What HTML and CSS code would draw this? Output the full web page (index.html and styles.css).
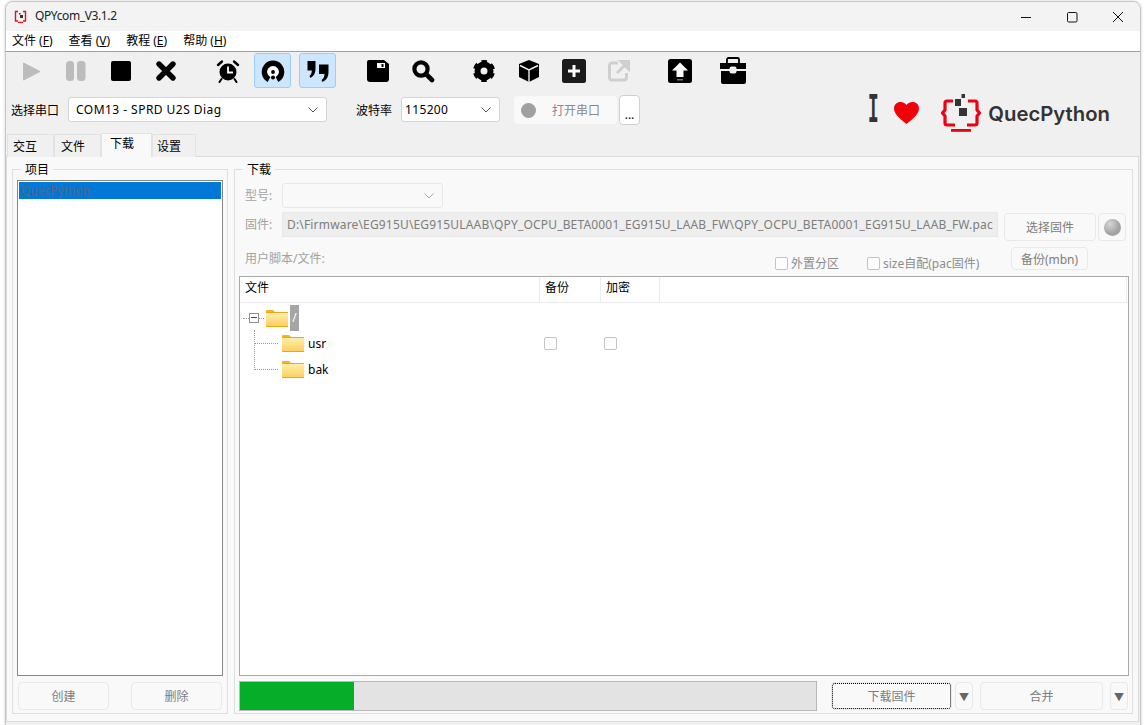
FILE: index.html
```html
<!DOCTYPE html>
<html>
<head>
  <title>QPYcom_V3.1.2</title>
  <link rel="stylesheet" href="styles.css">
</head>
<body>
<div class="window">
  <div class="titlebar">
    <svg class="app-icon" width="13" height="13" viewBox="0 0 13 13"><path d="M4 1.5H1.5V11H4M9 1.5H11.5V11H9M4 12.5H9" fill="none" stroke="#e8101c" stroke-width="1.4"/><rect x="5" y="3" width="1.5" height="1.5" fill="#333"/><rect x="6" y="5" width="3" height="3" fill="#333"/></svg>
    <span class="app-title">QPYcom_V3.1.2</span>
    <div class="win-controls">
      <div class="win-btn"><svg width="12" height="12" viewBox="0 0 12 12"><path d="M1 6.5H11" stroke="#111" stroke-width="1"/></svg></div>
      <div class="win-btn"><svg width="12" height="12" viewBox="0 0 12 12"><rect x="1.5" y="1.5" width="9.5" height="9.5" rx="1.2" fill="none" stroke="#111"/></svg></div>
      <div class="win-btn"><svg width="12" height="12" viewBox="0 0 12 12"><path d="M1 1L11 11M11 1L1 11" stroke="#111" stroke-width="1"/></svg></div>
    </div>
  </div>

  <div class="menubar">
    <span class="menu-item">文件 (<u>F</u>)</span>
    <span class="menu-item">查看 (<u>V</u>)</span>
    <span class="menu-item">教程 (<u>E</u>)</span>
    <span class="menu-item">帮助 (<u>H</u>)</span>
  </div>

  <div class="toolbar">
    <div class="tool"><svg width="22" height="22" viewBox="0 0 22 22"><path d="M3.5 3L20 11.5 3.5 20Z" fill="#bcbcbc" stroke="#bcbcbc" stroke-linejoin="round"/></svg></div>
    <div class="tool"><svg width="22" height="22" viewBox="0 0 22 22"><rect x="1" y="1" width="8" height="20" rx="3.5" fill="#bcbcbc"/><rect x="12" y="1" width="8.5" height="20" rx="3.5" fill="#bcbcbc"/></svg></div>
    <div class="tool"><svg width="22" height="22" viewBox="0 0 22 22"><rect x="1" y="1" width="20" height="20" rx="2" fill="#000"/></svg></div>
    <div class="tool"><svg width="22" height="22" viewBox="0 0 22 22"><path d="M4 4L18 18M18 4L4 18" stroke="#000" stroke-width="5.4" stroke-linecap="round"/></svg></div>
    <div class="tool gap gap-wide"><svg width="24" height="24" viewBox="0 0 24 24"><circle cx="12" cy="13" r="8.500" fill="#000"/><path d="M12 7.5V13.5H17" fill="none" stroke="#fff" stroke-width="1.8"/><path d="M2 6L6 2.500M22 6L18 2.500" stroke="#000" stroke-width="2.400" stroke-linecap="round"/><path d="M5.5 20L3.5 23M18.5 20L20.5 23" stroke="#000" stroke-width="2" stroke-linecap="round"/></svg></div>
    <div class="tool active"><svg width="24" height="24" viewBox="0 0 24 24"><circle cx="12" cy="12" r="6" fill="#fff"/><path d="M8 20.500A8.600 8.600 0 1 1 16 20.500" fill="none" stroke="#000" stroke-width="5.400"/><circle cx="12" cy="13" r="1.900" fill="#000"/><circle cx="12" cy="18.500" r="2" fill="#000"/></svg></div>
    <div class="tool active"><svg width="24" height="24" viewBox="0 0 24 24"><path d="M1.500 2H9.500V10C9.500 14 8 17 4.500 19L3.500 17C5 16 5.800 14 5.800 11.500H1.500ZM13 5.500H22.500V13.500C22.500 18 20.500 21 16.500 23L15.500 21C17.500 20 18.500 17.500 18.500 15H13Z" fill="#000"/></svg></div>
    <div class="tool gap"><svg width="24" height="24" viewBox="0 0 24 24"><path d="M3 1H18L23 5V20A3 3 0 0 1 20 23H4A3 3 0 0 1 1 20V3A2 2 0 0 1 3 1Z" fill="#000"/><rect x="11" y="4" width="8" height="5" fill="#fff"/><rect x="15.5" y="5" width="2" height="3" fill="#000"/></svg></div>
    <div class="tool"><svg width="24" height="24" viewBox="0 0 24 24"><circle cx="10" cy="10" r="6.6" fill="none" stroke="#000" stroke-width="4.2"/><path d="M15 15L21 21" stroke="#000" stroke-width="4.6" stroke-linecap="round"/></svg></div>
    <div class="tool gap"><svg width="24" height="24" viewBox="0 0 24 24"><circle cx="12" cy="12" r="6.500" fill="none" stroke="#000" stroke-width="6"/><circle cx="12" cy="12" r="9.200" fill="none" stroke="#000" stroke-width="3.800" stroke-dasharray="5.200 4.430" transform="rotate(13.500 12 12)"/></svg></div>
    <div class="tool"><svg width="24" height="24" viewBox="0 0 24 24"><path d="M12 1L22 5V18L12 23 2 18V5Z" fill="#000"/><path d="M3 6.5L12 11 21 6.5M12 11V23" fill="none" stroke="#f0f0f0" stroke-width="1.4"/></svg></div>
    <div class="tool"><svg width="24" height="24" viewBox="0 0 24 24"><rect width="24" height="24" rx="2.5" fill="#1b1b1b"/><path d="M12 6V18M6 12H18" stroke="#fff" stroke-width="3"/></svg></div>
    <div class="tool"><svg width="22" height="22" viewBox="0 0 22 22"><path d="M10 3H4A2.5 2.5 0 0 0 1.5 5.5V17.500A2.500 2.500 0 0 0 4 20H16A2.500 2.500 0 0 0 18.500 17.500V13" fill="none" stroke="#cfcfcf" stroke-width="3"/><path d="M9 13L17 5M13 1.500H21V9.500Z" stroke="#cfcfcf" stroke-width="2.800" fill="#cfcfcf"/></svg></div>
    <div class="tool gap"><svg width="24" height="24" viewBox="0 0 24 24"><rect width="24" height="24" rx="2.500" fill="#000"/><path d="M12 3.500L20 11.500H15.500V18H8.500V11.500H4Z" fill="#fff"/><rect x="9" y="20" width="6" height="1.500" fill="#777"/></svg></div>
    <div class="tool tool-case"><svg width="28" height="28" viewBox="0 0 28 28"><path d="M8 6V2.500A1.500 1.500 0 0 1 9.500 1H18.500A1.500 1.500 0 0 1 20 2.500V6" fill="none" stroke="#000" stroke-width="1.800"/><path d="M1 6H27V12H1ZM2 14H27V25A2 2 0 0 1 25 27H4A2 2 0 0 1 2 25Z" fill="#000"/><rect x="10.500" y="9.500" width="7" height="7" rx="2" fill="#f0f0f0"/></svg></div>
  </div>

  <div class="portrow">
    <div class="port-controls">
      <span class="port-label">选择串口</span>
      <div class="combo combo-port"><span>COM13 - SPRD U2S Diag</span><svg class="chev" width="10" height="6" viewBox="0 0 10 6"><path d="M0.500 0.500L5 5 9.500 0.500" fill="none" stroke="#555"/></svg></div>
      <span class="port-label baud-label">波特率</span>
      <div class="combo combo-baud"><span>115200</span><svg class="chev" width="10" height="6" viewBox="0 0 10 6"><path d="M0.500 0.500L5 5 9.500 0.500" fill="none" stroke="#555"/></svg></div>
      <div class="open-btn"><i class="lamp"></i><span>打开串口</span></div>
      <div class="more-btn">...</div>
    </div>
    <div class="brand">
      <span class="brand-i">I</span>
      <svg class="heart" width="25" height="22" viewBox="0 0 25 22"><path d="M12.500 22C9 19 0 13 0 6.500 0 2.500 3 0 6.500 0 9 0 11 1 12.500 3 14 1 16 0 18.500 0 22 0 25 2.500 25 6.500 25 13 16 19 12.500 22Z" fill="#f00008"/></svg>
      <svg class="logo" width="40" height="38" viewBox="0 0 40 38"><path d="M12 7H6A2 2 0 0 0 4 9V16L1.500 19 4 22V29A2 2 0 0 0 6 31H14M27 7H34A2 2 0 0 1 36 9V16L38.500 19 36 22V29A2 2 0 0 1 34 31H26" fill="none" stroke="#ee0010" stroke-width="3.200" stroke-linejoin="round"/><rect x="10" y="35" width="20" height="2.800" fill="#ee0010"/><rect x="14" y="5" width="6" height="7" fill="#333"/><rect x="18" y="14" width="8" height="8" fill="#333"/><rect x="20.500" y="0" width="3.500" height="4" fill="#333"/></svg>
      <span class="brand-name">QuecPython</span>
    </div>
  </div>

  <div class="tabs">
    <span class="tab">交互</span>
    <span class="tab">文件</span>
    <span class="tab tab-active">下载</span>
    <span class="tab tab-last">设置</span>
  </div>

  <div class="pane">
    <div class="group group-project">
      <span class="legend">项目</span>
      <div class="project-list">
        <div class="project-item">QuecPython</div>
      </div>
      <div class="project-actions">
        <div class="btn btn-project">创建</div>
        <div class="btn btn-project">删除</div>
      </div>
    </div>

    <div class="group group-download">
      <span class="legend">下载</span>
      <div class="form-row row-model">
        <span class="field-label">型号:</span>
        <div class="combo combo-model"><svg class="chev" width="10" height="6" viewBox="0 0 10 6"><path d="M0.500 0.500L5 5 9.500 0.500" fill="none" stroke="#aaa"/></svg></div>
      </div>
      <div class="form-row row-firmware">
        <span class="field-label">固件:</span>
        <div class="fw-path">D:\Firmware\EG915U\EG915ULAAB\QPY_OCPU_BETA0001_EG915U_LAAB_FW\QPY_OCPU_BETA0001_EG915U_LAAB_FW.pac</div>
        <div class="btn btn-pick">选择固件</div>
        <div class="btn btn-led"><i class="led"></i></div>
      </div>
      <div class="form-row row-script">
        <span class="field-label script-label">用户脚本/文件:</span>
        <label class="opt opt-ext"><i class="check"></i>外置分区</label>
        <label class="opt opt-size"><i class="check"></i>size自配(pac固件)</label>
        <div class="btn btn-backup">备份(mbn)</div>
      </div>

      <div class="tree">
        <div class="tree-head">
          <span>文件</span>
          <span>备份</span>
          <span>加密</span>
          <span></span>
        </div>
        <div class="tree-row tree-root">
          <i class="root-dots"></i><i class="toggle"></i><i class="root-dots root-dots-r"></i>
          <svg class="folder" width="22" height="18" viewBox="0 0 22 18"><use href="#folder"/></svg>
          <span class="root-name">/</span>
        </div>
        <div class="tree-row tree-child">
          <div class="tree-cell">
            <i class="branch"></i>
            <svg class="folder" width="22" height="18" viewBox="0 0 22 18"><use href="#folder"/></svg>
            <span class="node-name">usr</span>
          </div>
          <div class="tree-check"><i class="check"></i></div>
          <div class="tree-check"><i class="check"></i></div>
        </div>
        <div class="tree-row tree-child">
          <div class="tree-cell">
            <i class="branch branch-long"></i>
            <svg class="folder" width="22" height="18" viewBox="0 0 22 18"><use href="#folder"/></svg>
            <span class="node-name">bak</span>
          </div>
        </div>
      </div>

      <div class="bottom-row">
        <div class="progress"><div class="progress-fill" style="width: 19.8%"></div></div>
        <div class="btn btn-flash">下载固件</div>
        <div class="btn btn-arrow arrow-flash">▼</div>
        <div class="btn btn-merge">合并</div>
        <div class="btn btn-arrow arrow-merge">▼</div>
      </div>
    </div>
  </div>
</div>

<svg width="0" height="0" class="defs">
  <defs>
    <linearGradient id="fold" x1="0" y1="0" x2="0" y2="1"><stop offset="0" stop-color="#ffeeb0"/><stop offset="1" stop-color="#fdd05c"/></linearGradient>
    <symbol id="folder" viewBox="0 0 22 18">
      <path d="M0 2A1 1 0 0 1 1 1H7L9 3H0Z" fill="#f7b416"/>
      <rect x="0" y="3" width="22" height="15" fill="#e9a91c"/>
      <rect x="0" y="4" width="22" height="13" fill="url(#fold)"/>
    </symbol>
  </defs>
</svg>
</body>
</html>
```

FILE: styles.css
```css
html, body {
  margin: 0;
  height: 725px;
  overflow: hidden;
  background-color: #fff;
}
body {
  font-family: "Noto Sans", "Noto Sans CJK SC", sans-serif;
  font-size: 12px;
  color: #000;
}
i {
  display: block;
}
.defs {
  display: block;
}

.window {
  box-sizing: border-box;
  width: 1136px;
  height: 732px;
  margin: 1px 0 0 5px;
  border: 1px solid #c6c6c6;
  border-radius: 8px 8px 0 0;
  background-color: #f0f0f0;
  overflow: hidden;
  box-shadow: 0 0 3px rgba(0, 0, 0, 0.2);
}

.titlebar {
  display: flex;
  align-items: center;
  height: 29px;
  background-color: #f3f3f3;
}
.app-icon {
  margin-left: 8px;
}
.app-title {
  margin: 0 0 2px 8px;
  letter-spacing: -0.38px;
  color: #222;
}
.win-controls {
  display: flex;
  margin-left: auto;
  margin-right: -1px;
}
.win-btn {
  display: flex;
  align-items: center;
  justify-content: center;
  width: 46px;
  height: 29px;
}

.menubar {
  display: flex;
  gap: 16px;
  align-items: center;
  box-sizing: border-box;
  height: 21px;
  padding-left: 6px;
  background-color: #fff;
  border-bottom: 1px solid #a0a0a0;
}
.menu-item {
  line-height: 20px;
}

.toolbar {
  display: flex;
  gap: 8px;
  height: 41px;
  padding: 1px 0 0 6px;
  box-sizing: border-box;
}
.tool {
  display: flex;
  align-items: center;
  justify-content: center;
  box-sizing: border-box;
  width: 37px;
  height: 35px;
}
.tool.gap {
  margin-left: 16px;
}
.tool.gap-wide {
  margin-left: 17px;
}
.tool.gap-wide ~ .gap:nth-child(8) {
  margin-left: 15px;
}
.tool.active {
  background-color: #cde6ff;
  border: 1px solid #99ceff;
  border-radius: 3px;
}
.tool-case {
  margin-left: 8px;
}

.portrow {
  display: flex;
  justify-content: space-between;
  height: 40px;
}
.port-controls {
  display: flex;
  align-items: center;
  height: 33px;
  padding-left: 5px;
}
.port-label {
  width: 57px;
}
.baud-label {
  width: 45px;
  margin-left: 29px;
}
.combo {
  display: flex;
  align-items: center;
  justify-content: space-between;
  box-sizing: border-box;
  height: 25px;
  background-color: #fff;
  border: 1px solid #d4d4d4;
  border-radius: 3px;
  padding: 0 8px 0 7px;
}
.combo-port {
  width: 259px;
  letter-spacing: 0.46px;
}
.combo-baud {
  width: 99px;
  padding-left: 3px;
  letter-spacing: 0.35px;
}
.open-btn {
  display: flex;
  align-items: center;
  box-sizing: border-box;
  width: 103px;
  height: 28px;
  margin: 1px 0 0 14px;
  padding-left: 7px;
  background-color: #f9f9f9;
  border-radius: 4px;
  color: #8a8a8a;
}
.lamp {
  width: 15px;
  height: 15px;
  margin-right: 16px;
  border-radius: 50%;
  background-color: #a0a0a0;
}
.more-btn {
  box-sizing: border-box;
  width: 21px;
  height: 30px;
  margin: 1px 0 0 2px;
  padding-top: 10px;
  text-align: center;
  background-color: #fff;
  border: 1px solid #d0d0d0;
  border-radius: 4px;
}

.brand {
  display: flex;
  align-items: center;
  height: 38px;
  margin-top: 1px;
  padding-right: 30px;
}
.brand-i {
  width: 9px;
  margin-bottom: 4px;
  font: bold 42px/38px "Liberation Mono", monospace;
  color: #333;
  transform: scaleX(0.42);
  transform-origin: 0 50%;
}
.heart {
  margin: 0 0 1px 17px;
}
.logo {
  margin-left: 22px;
}
.brand-name {
  margin: 1px 0 0 7px;
  font: 600 20.3px/38px Inter, sans-serif;
  color: #333;
}

.tabs {
  display: flex;
  align-items: flex-end;
  position: relative;
  z-index: 1;
  height: 24px;
  margin-bottom: -1px;
  padding-left: 1px;
}
.tab {
  box-sizing: border-box;
  width: 47px;
  height: 23px;
  padding: 3px 0 0 6px;
  line-height: 18px;
  border: 1px solid #e3e3e3;
  border-bottom: 0;
  background-color: #f0f0f0;
}
.tab:first-child {
  padding-left: 5px;
}
.tab-active {
  width: 51px;
  height: 24px;
  padding-top: 1px;
  padding-left: 8px;
  background-color: #f9f9f9;
}
.tab-last {
  width: 44px;
  padding-left: 4px;
}

.pane {
  display: flex;
  gap: 6px;
  box-sizing: border-box;
  width: 1133px;
  height: 566px;
  padding: 12px 0 0 5px;
  background-color: #f9f9f9;
  border: 1px solid #dcdcdc;
}
.group {
  box-sizing: border-box;
  height: 545px;
  border: 1px solid #dedede;
}
.legend {
  display: block;
  width: fit-content;
  height: 16px;
  margin: -8px 0 0 8px;
  padding: 0 4px;
  line-height: 16px;
  background-color: #f9f9f9;
}

.group-project {
  width: 216px;
}
.project-list {
  box-sizing: border-box;
  height: 496px;
  margin: 2px 4px 0 4px;
  padding: 1px;
  background-color: #fff;
  border: 1px solid #868686;
}
.project-item {
  height: 17px;
  padding-left: 2px;
  line-height: 17px;
  background-color: #0078d7;
  color: #55677d;
}
.project-actions {
  display: flex;
  justify-content: space-between;
  margin: 6px 5px 0 5px;
}
.btn {
  display: flex;
  align-items: center;
  justify-content: center;
  box-sizing: border-box;
  height: 28px;
  background-color: #f9f9f9;
  border: 1px solid #e9e9e9;
  border-radius: 4px;
  color: #7d7d7d;
}
.btn-project {
  width: 91px;
}

.group-download {
  width: 899px;
}
.form-row {
  display: flex;
  padding-left: 10px;
}
.field-label {
  width: 37px;
  line-height: 25px;
  color: #a2a2a2;
}
.row-model {
  height: 25px;
  margin-top: 5px;
}
.combo-model {
  width: 161px;
  justify-content: flex-end;
  background-color: #f9f9f9;
  border-color: #e8e8e8;
}
.row-firmware {
  height: 29px;
  margin-top: 4px;
}
.fw-path {
  box-sizing: border-box;
  width: 716px;
  height: 25px;
  padding-left: 4px;
  line-height: 23px;
  letter-spacing: 0.17px;
  white-space: nowrap;
  overflow: hidden;
  background-color: #eee;
  border: 1px solid #e8e8e8;
  color: #7d7d7d;
}
.btn-pick {
  width: 92px;
  margin: 1px 0 0 6px;
}
.btn-led {
  width: 28px;
  margin: 1px 0 0 2px;
}
.led {
  width: 17px;
  height: 17px;
  border-radius: 50%;
  background: radial-gradient(circle at 35% 30%, #d6d6d6, #a2a2a2 60%);
}
.row-script {
  height: 23px;
  margin-top: 6px;
}
.script-label {
  width: 530px;
  line-height: 24px;
}
.opt {
  display: flex;
  align-items: center;
  height: 16px;
  margin-top: 8px;
  color: #8c8c8c;
}
.opt .check {
  margin-right: 3px;
}
.opt-ext {
  width: 92px;
}
.opt-size {
  width: 144px;
}
.check {
  box-sizing: border-box;
  width: 13px;
  height: 13px;
  background-color: #fdfdfd;
  border: 1px solid #c4c4c4;
  border-radius: 2px;
}
.btn-backup {
  width: 77px;
  height: 23px;
}

.tree {
  box-sizing: border-box;
  width: 890px;
  height: 400px;
  margin: 6px 0 0 4px;
  background-color: #fff;
  border: 1px solid #aaa;
}
.tree-head {
  display: grid;
  grid-template-columns: 300px 61px 59px 467px;
  height: 26px;
  border-bottom: 1px solid #ececec;
  box-sizing: border-box;
}
.tree-head span {
  padding-left: 5px;
  line-height: 22px;
  border-right: 1px solid #ececec;
}
.tree-row {
  display: flex;
  align-items: center;
  height: 26px;
}
.tree-root {
  margin: 2px 0 -1px;
  padding-left: 3px;
}
.root-dots {
  width: 6px;
  border-top: 1px dotted #999;
}
.root-dots-r {
  width: 5px;
  margin-right: 2px;
}
.toggle {
  box-sizing: border-box;
  width: 10px;
  height: 10px;
  border: 1px solid #8c8c9c;
}
.toggle::after {
  content: "";
  display: block;
  height: 1px;
  margin: 3px 1px 0;
  background-color: #35488c;
}
.root-name {
  align-self: stretch;
  width: 9px;
  margin-left: 2px;
  line-height: 26px;
  text-align: center;
  background-color: #a5a5a5;
  color: #fff;
}
.tree-cell {
  display: flex;
  align-items: center;
  width: 300px;
  height: 26px;
}
.branch {
  box-sizing: border-box;
  align-self: flex-start;
  width: 24px;
  height: 14px;
  margin: 0 4px 0 14px;
  border-left: 1px dotted #999;
  border-bottom: 1px dotted #999;
}
.branch-long {
  height: 27px;
  margin-top: -13px;
}
.node-name {
  margin-left: 4px;
}
.tree-check {
  box-sizing: border-box;
  width: 60px;
  height: 26px;
  padding: 7px 0 0 4px;
}

.bottom-row {
  display: flex;
  height: 30px;
  margin: 5px 0 0 4px;
}
.progress {
  box-sizing: border-box;
  width: 578px;
  height: 30px;
  background-color: #e3e3e3;
  border: 1px solid #b8b8b8;
}
.progress-fill {
  height: 100%;
  background-color: #05ae29;
}
.bottom-row .btn {
  margin-top: 1px;
}
.btn-flash {
  width: 121px;
  margin-left: 14px;
  outline: 1px dotted #000;
  outline-offset: -2px;
}
.btn-arrow {
  width: 18px;
  font-size: 10px;
  color: #666;
}
.arrow-flash {
  margin-left: 3px;
}
.btn-merge {
  width: 123px;
  margin-left: 7px;
}
.arrow-merge {
  margin-left: 7px;
}
```
